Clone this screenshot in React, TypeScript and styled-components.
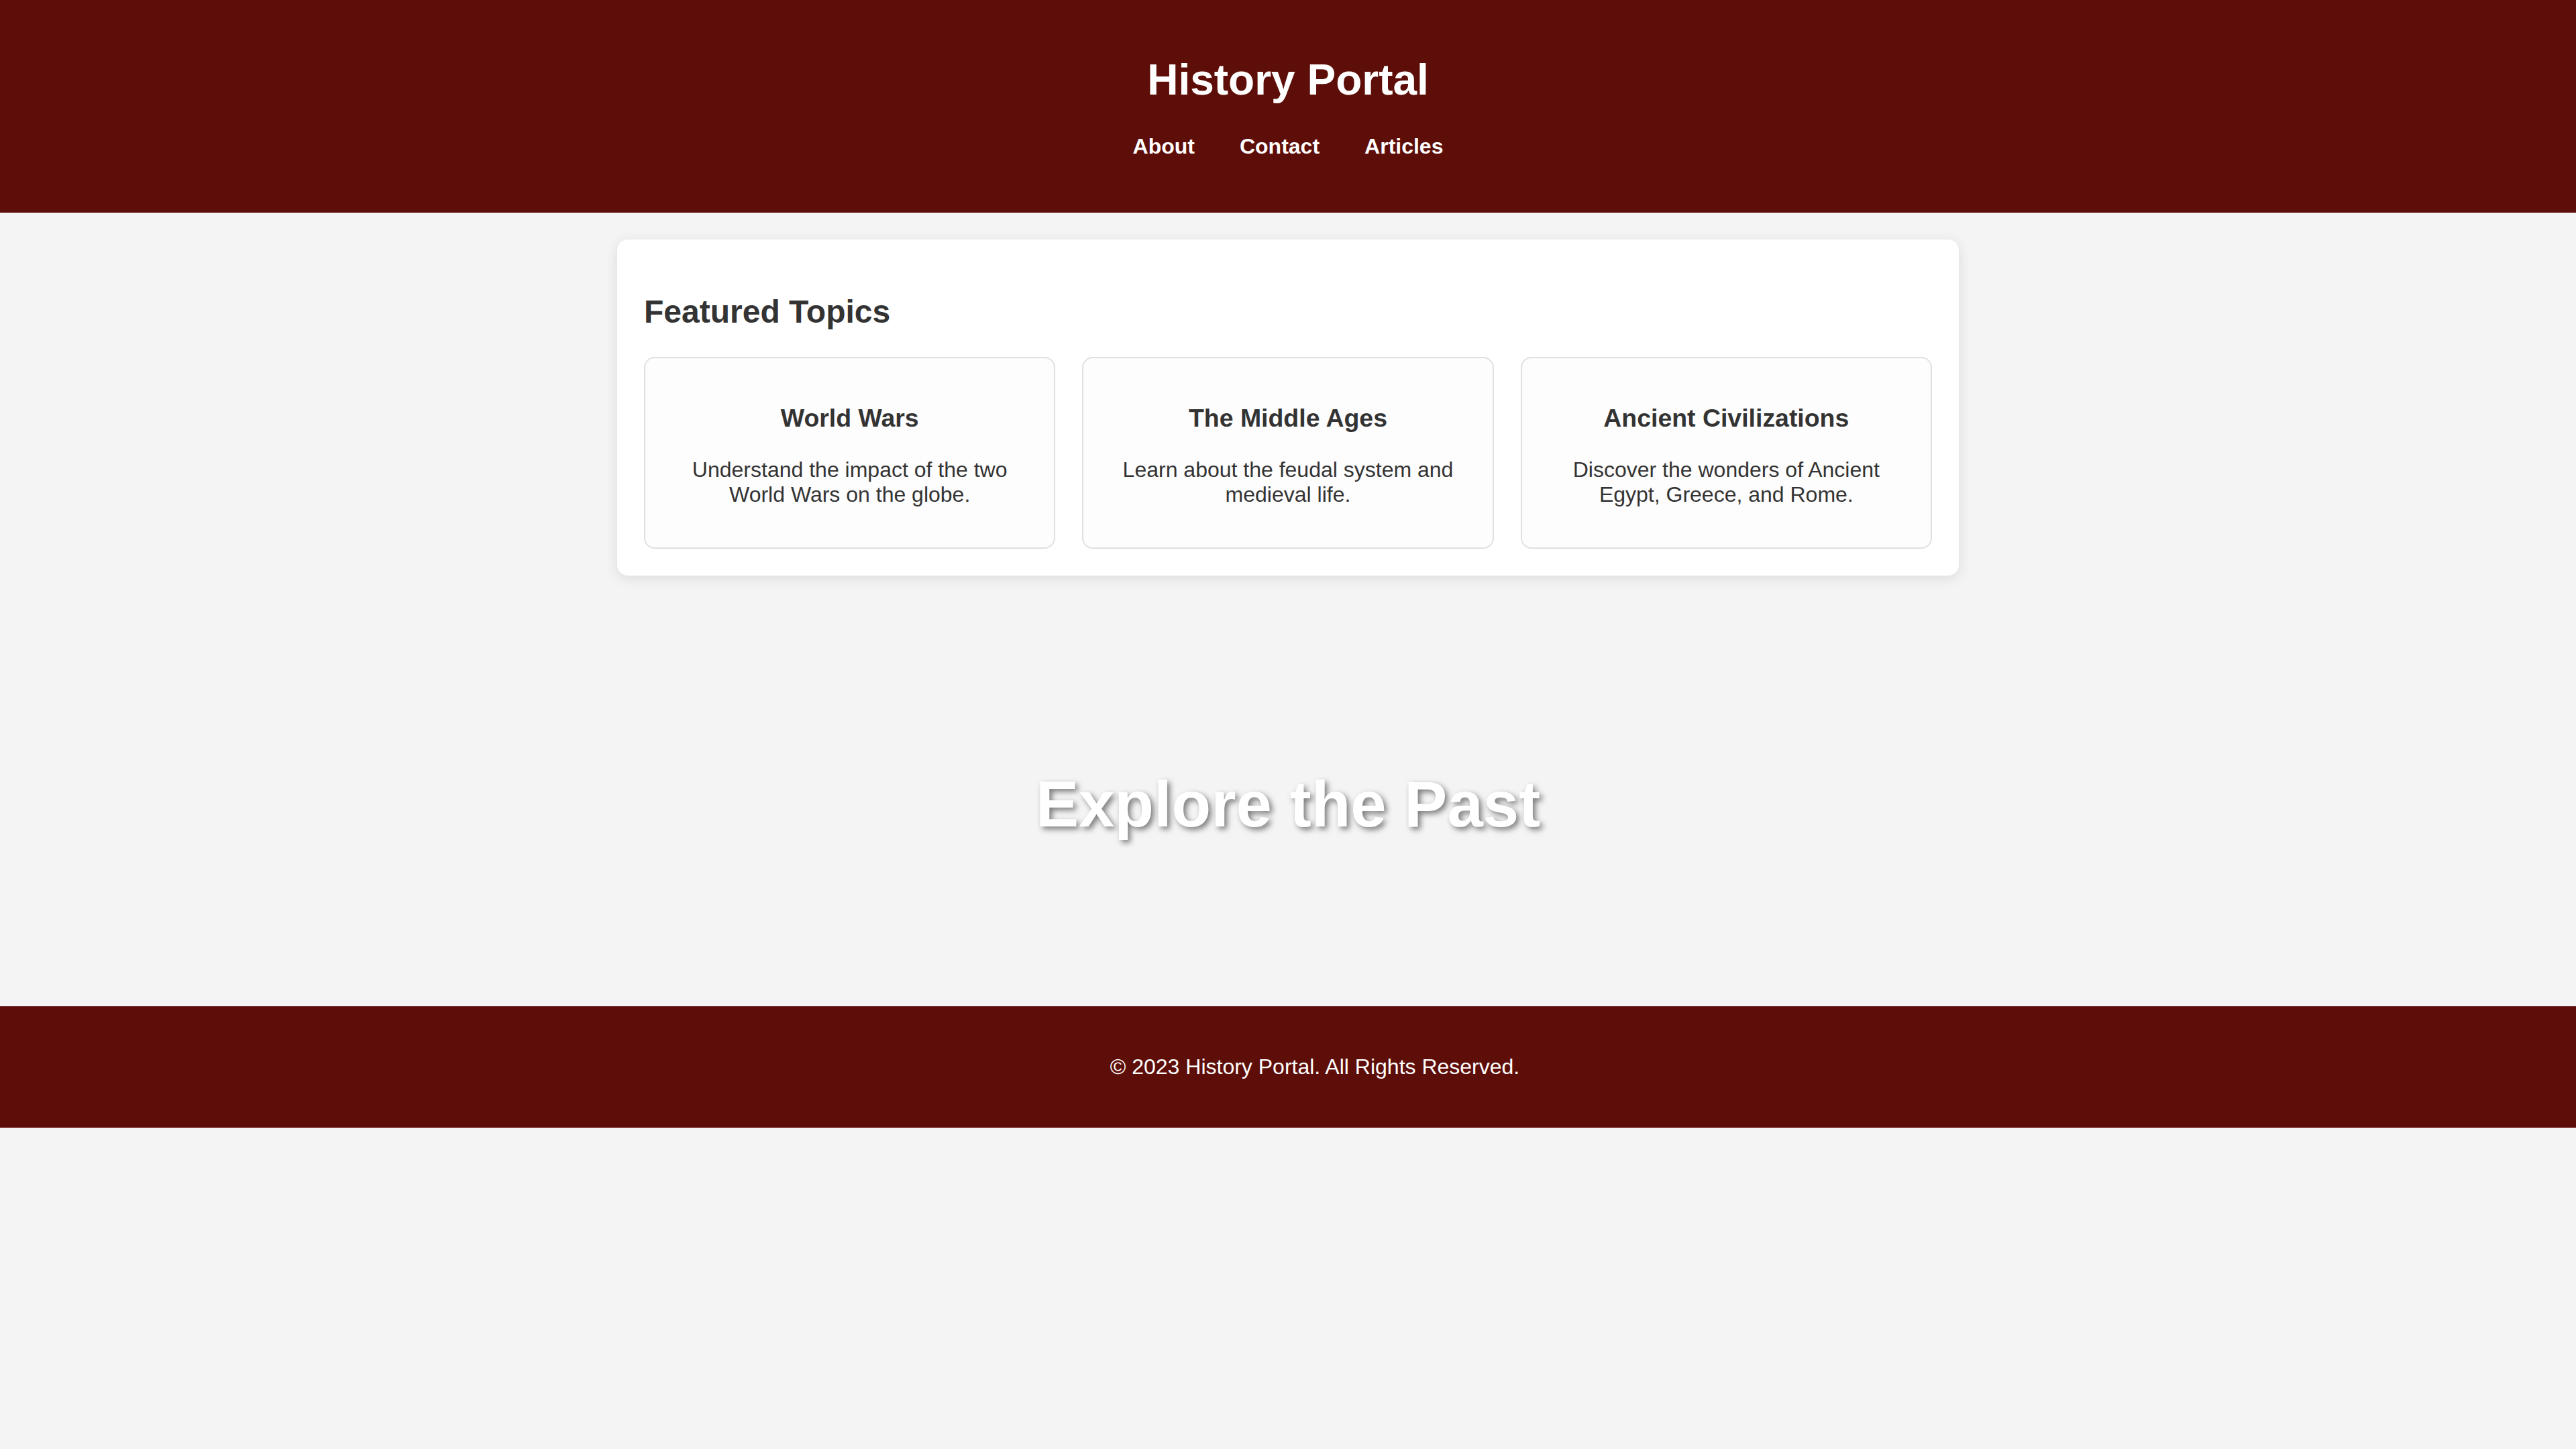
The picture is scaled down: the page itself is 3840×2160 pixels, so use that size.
import React from "react";
import styled, { createGlobalStyle } from "styled-components";

const GlobalStyle = createGlobalStyle`
  body {
    margin: 0;
    background: #f4f4f4;
    font-family: "Liberation Sans", Arial, sans-serif;
    color: #333;
    overflow-x: hidden;
  }
`;

export const Header = styled.header`
  background: #5e0e08;
  color: #fff;
  text-align: center;
  padding: 40px 40px 44px;
`;

export const SiteTitle = styled.h1`
  font-size: 64px;
  line-height: 74px;
  margin: 42px 0 44px;
  font-weight: bold;
`;

export const Nav = styled.nav`
  display: flex;
  justify-content: center;
  gap: 67px;
  margin-bottom: 36px;
`;

export const NavLink = styled.a`
  color: #fff;
  font-size: 32px;
  line-height: 37px;
  font-weight: bold;
  text-decoration: none;
  cursor: pointer;
  :hover {
    opacity: 0.7;
  }
`;

export const Main = styled.main`
  max-width: 2000px;
  margin: 40px auto 0;
  background: #fff;
  border-radius: 16px;
  box-shadow: 0 4px 20px rgba(0, 0, 0, 0.1);
  padding: 40px;
  box-sizing: border-box;
`;

export const SectionTitle = styled.h2`
  font-size: 48px;
  line-height: 55px;
  margin: 40px 0 40px;
  color: #333;
`;

export const TopicGrid = styled.div`
  display: grid;
  grid-template-columns: repeat(3, 1fr);
  gap: 40px;
`;

export const TopicCard = styled.div`
  background: #fdfdfd;
  border: 2px solid #e0e0e0;
  border-radius: 16px;
  padding: 30px 40px;
  text-align: center;
`;

export const TopicTitle = styled.h3`
  font-size: 37.44px;
  line-height: 43px;
  margin: 38px 0 37px;
  color: #333;
`;

export const TopicText = styled.p`
  font-size: 32px;
  line-height: 37px;
  margin: 0 0 30px;
  color: #333;
`;

export const Hero = styled.section`
  margin-top: 40px;
  height: 602px;
  display: flex;
  align-items: center;
  justify-content: center;
`;

export const HeroTitle = styled.h2`
  margin: 0;
  font-size: 96px;
  line-height: 110px;
  font-weight: bold;
  color: #fff;
  text-shadow: 4px 4px 8px rgba(0, 0, 0, 0.5);
`;

export const Footer = styled.footer`
  background: #5e0e08;
  color: #fff;
  text-align: center;
  padding: 40px 0 40px 80px;
`;

export const FooterText = styled.p`
  margin: 32px 0;
  font-size: 32px;
  line-height: 37px;
`;

const topics = [
  {
    title: "World Wars",
    text: "Understand the impact of the two World Wars on the globe.",
  },
  {
    title: "The Middle Ages",
    text: "Learn about the feudal system and medieval life.",
  },
  {
    title: "Ancient Civilizations",
    text: "Discover the wonders of Ancient Egypt, Greece, and Rome.",
  },
];

const App: React.FC = () => {
  return (
    <>
      <GlobalStyle />
      <Header>
        <SiteTitle>History Portal</SiteTitle>
        <Nav>
          <NavLink>About</NavLink>
          <NavLink>Contact</NavLink>
          <NavLink>Articles</NavLink>
        </Nav>
      </Header>
      <Main>
        <SectionTitle>Featured Topics</SectionTitle>
        <TopicGrid>
          {topics.map((t) => (
            <TopicCard key={t.title}>
              <TopicTitle>{t.title}</TopicTitle>
              <TopicText>{t.text}</TopicText>
            </TopicCard>
          ))}
        </TopicGrid>
      </Main>
      <Hero>
        <HeroTitle>Explore the Past</HeroTitle>
      </Hero>
      <Footer>
        <FooterText>© 2023 History Portal. All Rights Reserved.</FooterText>
      </Footer>
    </>
  );
};

export default App;
